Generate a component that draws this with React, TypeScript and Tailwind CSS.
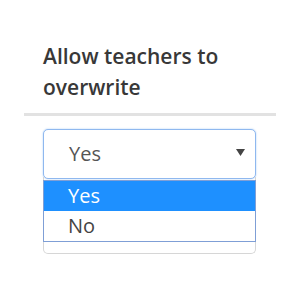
export default function App() {
  return (
    <div className="w-[300px] h-[300px] bg-white px-6 pt-[41px]" style={{ fontFamily: '"Open Sans", sans-serif' }}>
      <h2 className="ml-[19px] text-[21px] leading-[31px] font-semibold text-[#383838]">
        Allow teachers to
        <br />
        overwrite
      </h2>
      <div className="mt-[10px] h-[3px] bg-[#e2e2e2]" />
      <div className="relative ml-[19px] mr-[20px] mt-[13px]">
        <div className="flex h-[50px] items-center justify-between rounded-[5px] border border-[#8fb8ef] pl-[25px] pr-[10px] shadow-[0_0_2px_#a9ccf5] bg-white">
          <span className="text-[20px] text-[#555]">Yes</span>
          <svg width="9" height="7" viewBox="0 0 9 7" className="mb-[3px]">
            <path d="M0 0h9L4.5 7z" fill="#444" />
          </svg>
        </div>
        <div className="h-[77px] rounded-b-[5px] border-x border-b border-[#d6d6d6] -mt-[2px]" />
        <div className="absolute left-0 right-0 top-[51px] border border-[#7f9fd6] bg-white">
          <div className="h-[30px] bg-[#1e90ff] pl-[24px] text-[20px] leading-[30px] text-white">Yes</div>
          <div className="h-[30px] pl-[24px] text-[20px] leading-[30px] text-[#444]">No</div>
        </div>
      </div>
    </div>
  );
}
